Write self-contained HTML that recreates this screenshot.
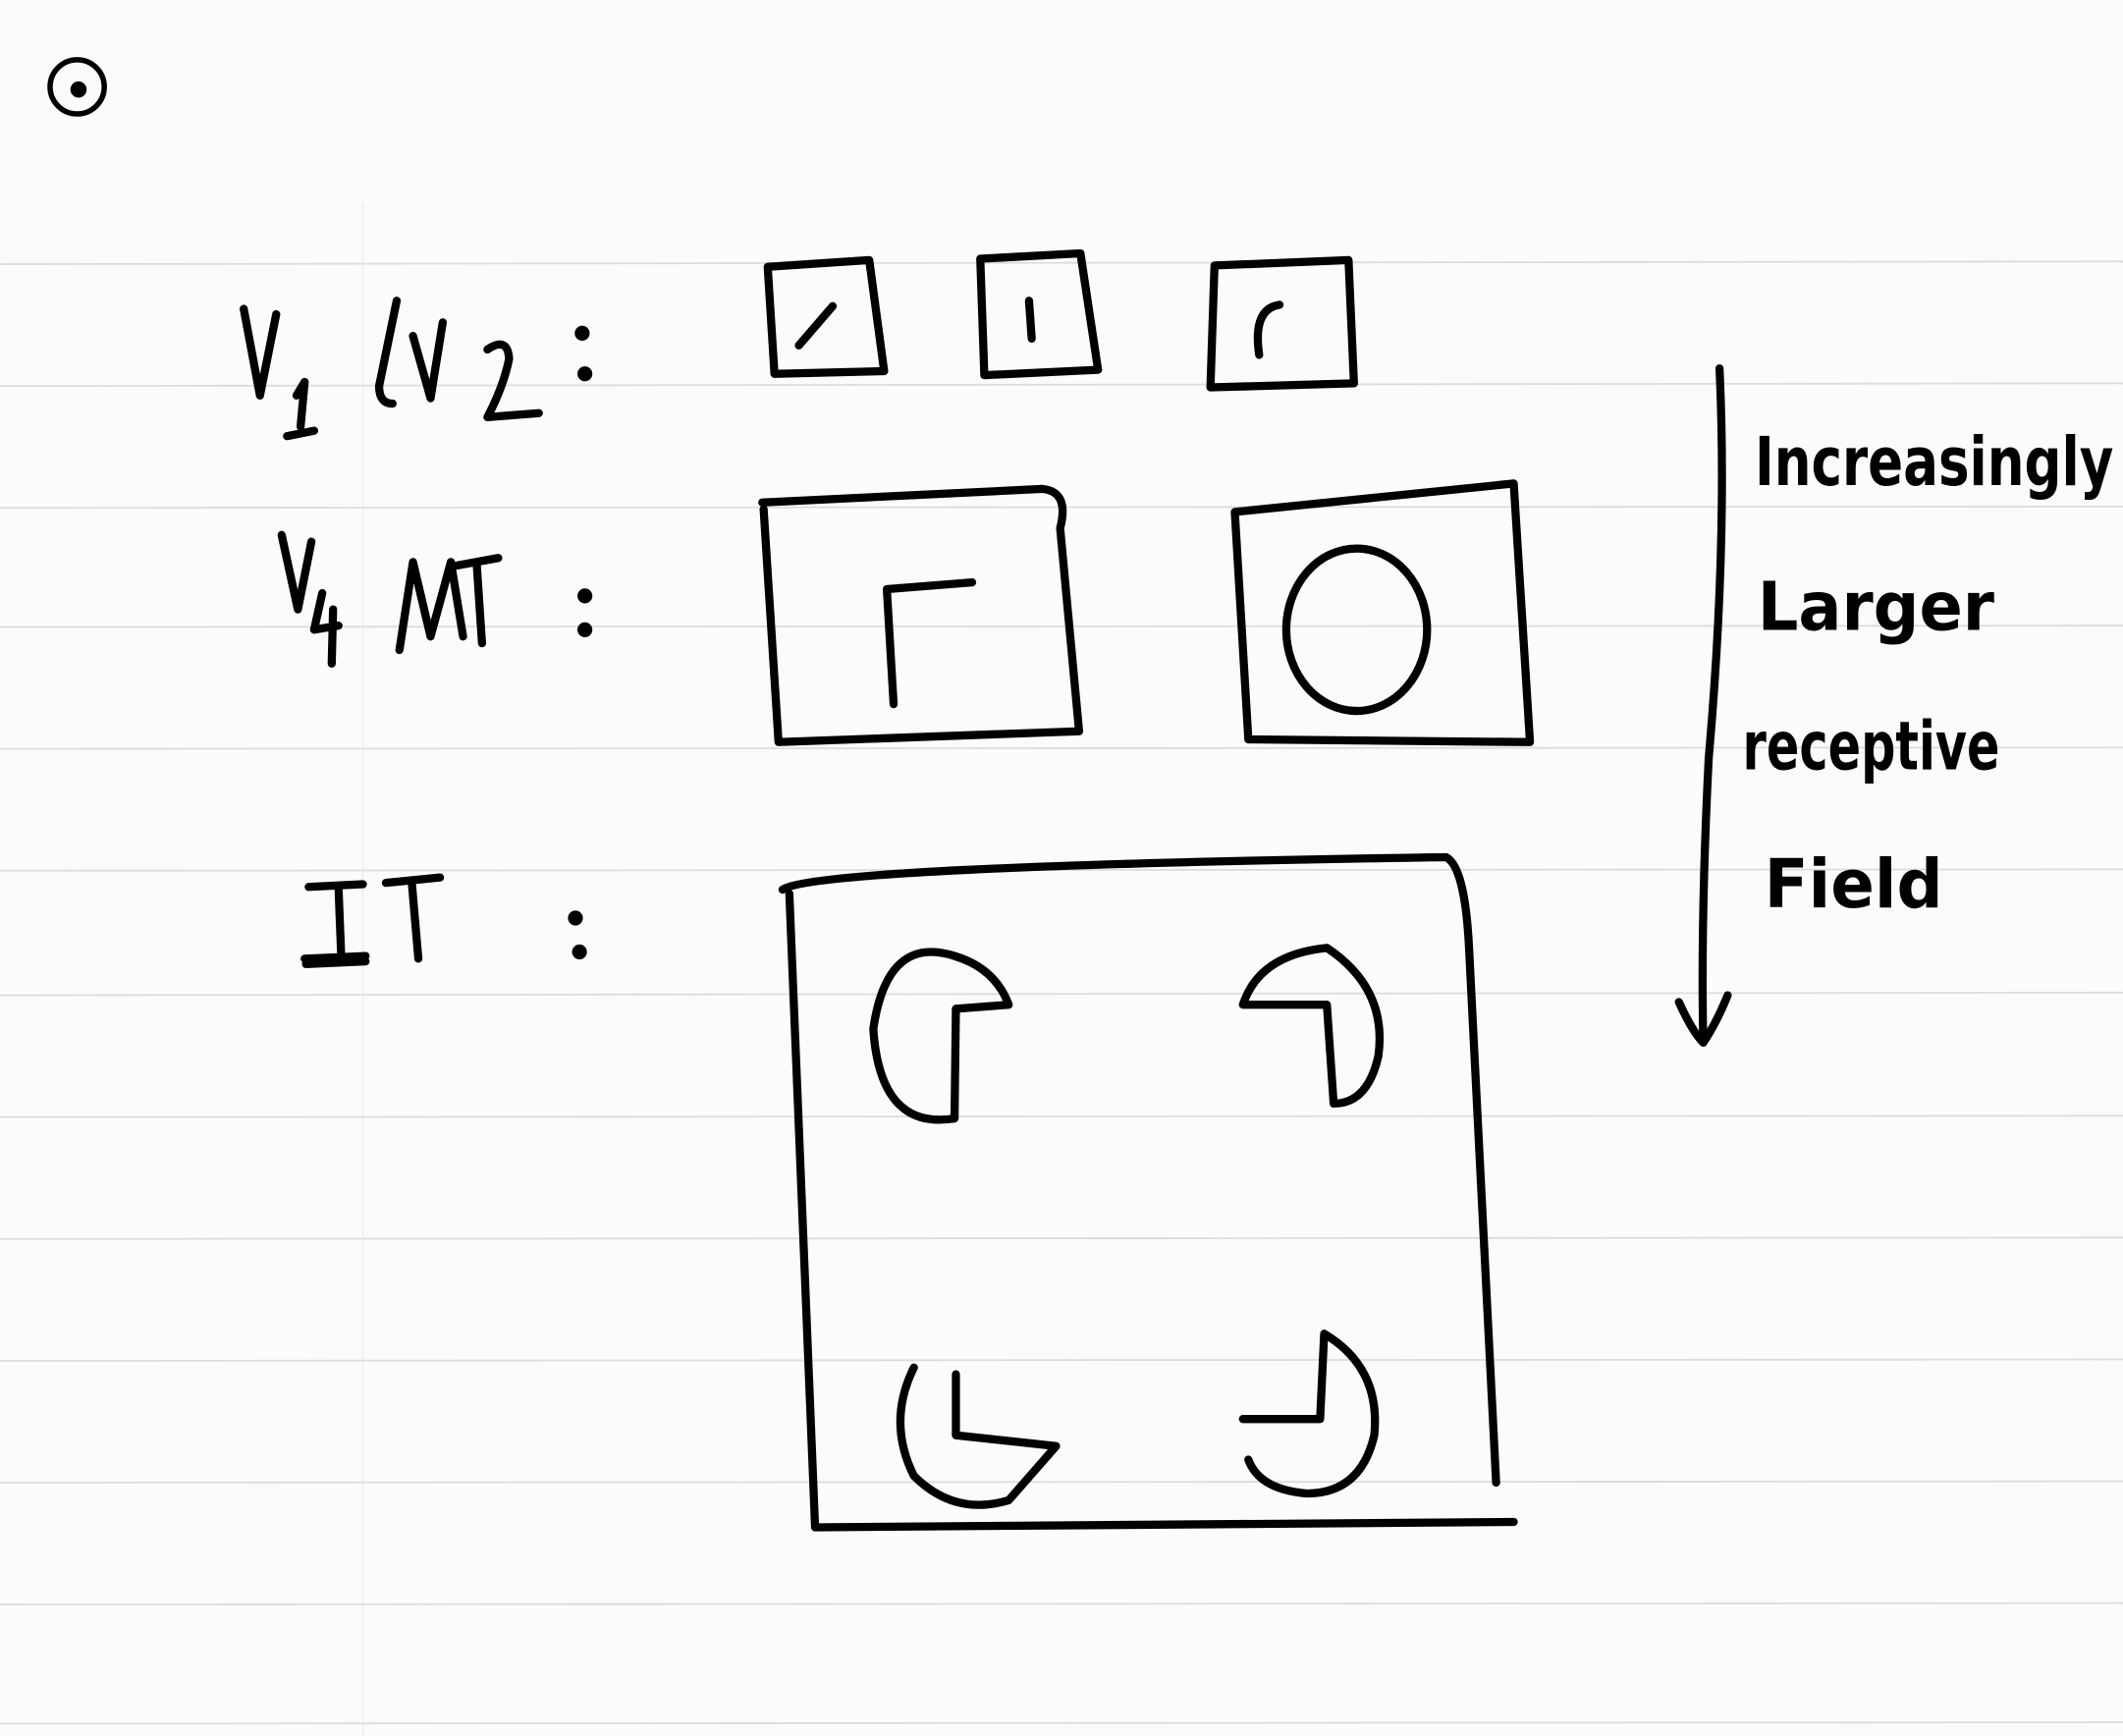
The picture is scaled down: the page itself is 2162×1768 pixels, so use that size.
<!DOCTYPE html>
<html><head><meta charset="utf-8"><style>
html,body{margin:0;padding:0;background:#fbfbfa;}
svg{display:block}
text{font-family:"DejaVu Sans","Liberation Sans",sans-serif;fill:#000}
</style></head><body>
<svg width="2162" height="1768" viewBox="0 0 1568 1282" xmlns="http://www.w3.org/2000/svg">
<rect width="1568" height="1282" fill="#fbfbfa"/>
<g stroke="#dcdcdc" stroke-width="1.3">
<line x1="0" y1="195" x2="1568" y2="193"/>
<line x1="0" y1="285" x2="1568" y2="283"/>
<line x1="0" y1="375" x2="1568" y2="374"/>
<line x1="0" y1="463" x2="1568" y2="462"/>
<line x1="0" y1="553" x2="1568" y2="552"/>
<line x1="0" y1="643" x2="1568" y2="642"/>
<line x1="0" y1="735" x2="1568" y2="733"/>
<line x1="0" y1="825" x2="1568" y2="824"/>
<line x1="0" y1="915" x2="1568" y2="914"/>
<line x1="0" y1="1005" x2="1568" y2="1004"/>
<line x1="0" y1="1095" x2="1568" y2="1094"/>
<line x1="0" y1="1185" x2="1568" y2="1184"/>
<line x1="0" y1="1273" x2="1568" y2="1272"/>
</g>
<line x1="268" y1="150" x2="268" y2="1282" stroke="#ececec" stroke-width="1"/>
<g fill="none" stroke="#000" stroke-width="6" stroke-linecap="round" stroke-linejoin="round">
<circle cx="57" cy="64" r="20" stroke-width="4"/>
<circle cx="58" cy="66" r="3" fill="#000"/>
<!-- V1/V2 -->
<path d="M180 228 L192 292 L204 232"/>
<path d="M222 315 L225 282 L219 292 M212 322 L232 318"/>
<path d="M293 222 L280 285 Q280 298 290 298"/>
<path d="M305 248 L318 294 L327 238"/>
<path d="M360 258 Q375 248 376 265 Q372 285 360 308 L398 305"/>
<circle cx="430" cy="246" r="2.5" fill="#000"/><circle cx="432" cy="276" r="2.5" fill="#000"/>
<!-- small boxes -->
<path d="M567 197 L642 192 L653 274 L572 276 Z"/>
<path d="M590 255 L615 226"/>
<path d="M724 191 L798 187 L811 273 L727 277 Z"/>
<path d="M760 222 L762 250"/>
<path d="M897 196 L996 192 L1000 283 L894 286 Z"/>
<path d="M930 262 Q925 228 945 225"/>
<!-- V4/MT -->
<path d="M208 395 L220 450 L230 400 M238 438 L232 465 L250 462 M246 450 L245 490"/>
<path d="M295 480 L305 415 L318 470 L333 415 L342 470 M335 418 L368 412 M352 415 L356 475"/>
<circle cx="432" cy="440" r="2.5" fill="#000"/><circle cx="432" cy="465" r="2.5" fill="#000"/>
<path d="M563 371 L770 361 Q790 363 783 390 L797 540 L575 548 L564 376"/>
<path d="M660 520 L655 435 L718 430"/>
<path d="M912 378 L1118 357 L1130 548 L922 546 Z"/>
<ellipse cx="1002" cy="465" rx="52" ry="60"/>
<!-- IT -->
<path d="M228 655 L268 653 M250 655 L252 706 M225 708 L270 706 M226 712 L270 710"/>
<path d="M285 652 L325 648 M304 650 L309 708"/>
<circle cx="425" cy="678" r="2.5" fill="#000"/><circle cx="428" cy="703" r="2.5" fill="#000"/>
<path d="M578 657 Q600 640 1068 633 Q1082 640 1085 700 L1105 1095 M1118 1124 L602 1128 L583 660"/>
<path d="M705 826 Q650 835 645 760 Q655 690 705 706 Q735 715 745 742 L706 745 Z"/>
<path d="M918 742 Q930 705 980 700 Q1025 730 1018 780 Q1010 815 985 815 L980 742 Z"/>
<path d="M675 1010 Q655 1050 675 1090 Q705 1120 745 1108 L780 1068 L706 1060 L706 1015"/>
<path d="M918 1048 L975 1048 L978 985 Q1020 1010 1015 1060 Q1005 1103 965 1103 Q930 1100 922 1078"/>
<!-- arrow -->
<path d="M1270 272 Q1276 400 1262 560 Q1256 680 1258 770 M1240 740 Q1250 762 1258 770 Q1268 755 1276 735"/>
</g>
<g font-size="50" font-weight="600">
<text x="1296" y="358" textLength="265" lengthAdjust="spacingAndGlyphs">Increasingly</text>
<text x="1298" y="465" textLength="175" lengthAdjust="spacingAndGlyphs">Larger</text>
<text x="1287" y="568" textLength="190" lengthAdjust="spacingAndGlyphs">receptive</text>
<text x="1303" y="670" textLength="132" lengthAdjust="spacingAndGlyphs">Field</text>
</g>
</svg>
</body></html>
